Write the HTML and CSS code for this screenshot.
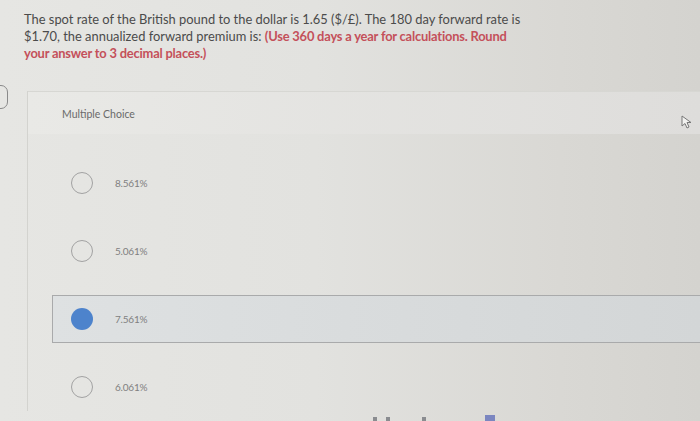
FILE: index.html
```html
<!DOCTYPE html>
<html>
<head>
<meta charset="utf-8">
<link rel="stylesheet" href="styles.css">
</head>
<body>
<div class="page">
  <p class="question">The spot rate of the British pound to the dollar is 1.65 ($/£). The 180 day forward rate is $1.70, the annualized forward premium is: <strong class="hint">(Use 360 days a year for calculations. Round your answer to 3 decimal places.)</strong></p>
  <div class="edge-ring"></div>
  <section class="card">
    <header class="card-head">Multiple Choice</header>
    <ul class="options">
      <li class="option"><span class="radio"></span><span class="label">8.561%</span></li>
      <li class="option"><span class="radio"></span><span class="label">5.061%</span></li>
      <li class="option selected"><span class="radio"></span><span class="label">7.561%</span></li>
      <li class="option"><span class="radio"></span><span class="label">6.061%</span></li>
    </ul>
  </section>
  <svg class="cursor" width="12" height="14" viewBox="0 0 12 14"><path d="M1 1 L1 11 L4 8.5 L6 13 L8 12 L6 7.5 L10 7.5 Z" fill="#f2f2f0" stroke="#777" stroke-width="1"/></svg>
  <div class="dock">
    <span class="d1"></span><span class="d2"></span><span class="d3"></span><span class="d4"></span>
  </div>
</div>
</body>
</html>
```
FILE: styles.css
```css
html, body {
  margin: 0;
  padding: 0;
}
body {
  width: 700px;
  height: 421px;
  overflow: hidden;
  background: linear-gradient(90deg, #e6e6e3 0%, #e2e2df 45%, #d9d8d4 80%, #d4d3cf 100%);
  font-family: "Lato", "Liberation Sans", sans-serif;
}
.page {
  position: relative;
  width: 700px;
  height: 421px;
}
.question {
  margin: 0;
  padding: 11px 0 0 24px;
  width: 505px;
  font-size: 12.9px;
  line-height: 17px;
  color: #4b4b4b;
}
.hint {
  color: #c4505a;
  font-weight: 700;
  letter-spacing: -0.2px;
}
.edge-ring {
  position: absolute;
  left: -14px;
  top: 85px;
  width: 20px;
  height: 22px;
  border: 1.5px solid #8a8a8a;
  border-radius: 7px;
}
.card {
  margin: 29px 0 0 27px;
  border-left: 1px solid #d3d3cf;
}
.card-head {
  height: 43px;
  box-sizing: border-box;
  padding: 16px 0 0 34px;
  font-size: 10.5px;
  color: #6a6a6a;
  background: linear-gradient(90deg, #e9e9e6, #dedddb);
  border-top: 1px solid #d7d7d3;
}
.options {
  list-style: none;
  margin: 0;
  padding: 25px 0 0 24px;
  display: flex;
  flex-direction: column;
  gap: 20px;
}
.option {
  height: 48px;
  box-sizing: border-box;
  display: flex;
  align-items: center;
  padding-left: 18px;
  border: 1px solid transparent;
}
.option.selected {
  background: linear-gradient(90deg, #dee1e2, #d3d6d7);
  border-color: #a9aaab;
  border-right: none;
}
.radio {
  width: 20px;
  height: 20px;
  border-radius: 50%;
  border: 1.5px solid #a2a2a2;
  flex: none;
}
.selected .radio {
  background: #4d83cc;
  border-color: #4d83cc;
  width: 22px;
  height: 22px;
  border-width: 0;
}
.label {
  margin-left: 22px;
  font-size: 10px;
  color: #808080;
  letter-spacing: -0.2px;
}
.cursor {
  position: absolute;
  left: 681px;
  top: 115px;
}
.dock {
  position: absolute;
  left: 370px;
  top: 415px;
  width: 130px;
  height: 6px;
}
.dock span {
  position: absolute;
  top: 2px;
  width: 4px;
  height: 4px;
  background: #8a8c90;
}
.dock .d1 { left: 3px; }
.dock .d2 { left: 16px; }
.dock .d3 { left: 52px; }
.dock .d4 { left: 115px; top: 0; width: 10px; height: 6px; background: #7b86c0; }
```
